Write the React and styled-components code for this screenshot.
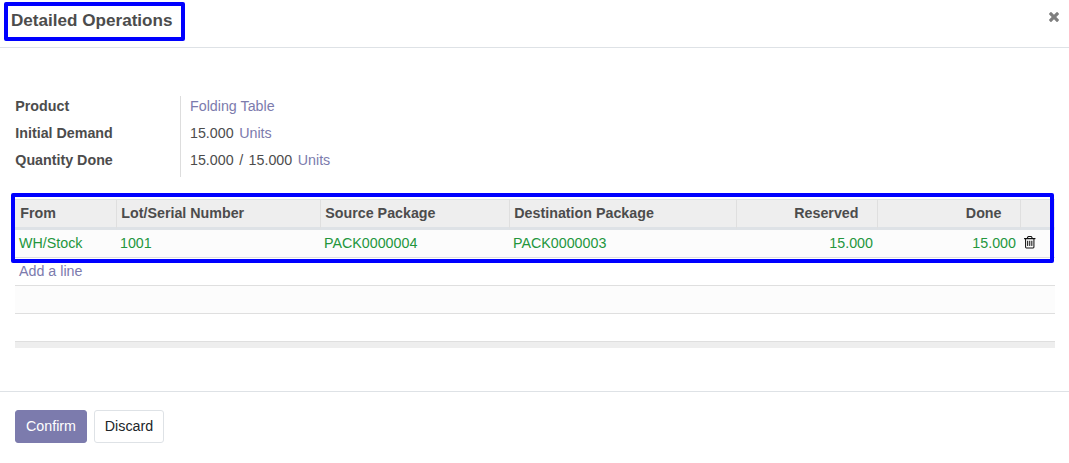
import React from "react";
import styled, { createGlobalStyle } from "styled-components";

const GlobalStyle = createGlobalStyle`
  *, *::before, *::after { box-sizing: border-box; }
  body {
    margin: 0;
    background: #fff;
    color: #4c4c4c;
    font: 14.27px/21px "Liberation Sans", Arial, sans-serif;
  }
`;

const Dialog = styled.div`
  display: flex;
  flex-direction: column;
  width: 1069px;
  height: 463px;
  overflow: hidden;
`;

const Header = styled.header`
  display: flex;
  justify-content: space-between;
  align-items: flex-start;
  height: 48px;
  padding: 2px 10px 0 4px;
  border-bottom: 1px solid #dee2e6;
`;

const Title = styled.h4`
  width: 181px;
  height: 39px;
  margin: 0;
  padding: 0 0 0 3px;
  border: 4px solid #0000ff;
  border-radius: 2px;
  font-size: 17.1px;
  font-weight: bold;
  line-height: 29px;
  white-space: nowrap;
`;

const CloseButton = styled.button`
  display: flex;
  margin: 10px 0 0;
  padding: 0;
  border: 0;
  background: none;
  color: #7f7f7f;
`;

const Body = styled.main`
  flex: 1;
  padding: 48px 14px 0 15px;
`;

const Fields = styled.dl`
  display: grid;
  grid-template-columns: 165px 1fr;
  grid-auto-rows: 27px;
  margin: 0;
  line-height: 20px;
`;

const Label = styled.dt`
  padding-left: 0.3px;
  font-weight: bold;
`;

const Value = styled.dd`
  display: flex;
  gap: 5.5px;
  margin: 0;
  padding-left: 9px;
  border-left: 1px solid #dddddd;
`;

const Link = styled.a`
  color: #7c7bad;
`;

const ListArea = styled.section`
  position: relative;
  margin-top: 22px;
`;

const Outline = styled.div`
  position: absolute;
  top: -6px;
  left: -4px;
  width: 1043px;
  height: 70px;
  border: 4px solid #0000ff;
  border-radius: 2px;
  pointer-events: none;
`;

const Table = styled.table`
  width: 1040px;
  table-layout: fixed;
  border-collapse: separate;
  border-spacing: 0;
`;

const HeadCell = styled.th`
  height: 31px;
  padding: 0 ${(p) => (p.$numeric ? "18.5px" : "4px")} 1px;
  border-top: 1px solid #dee2e6;
  border-bottom: 3px solid #dee2e6;
  border-left: ${(p) => (p.$first ? "0" : "1px solid #dfdfdf")};
  padding-left: ${(p) => (p.$first ? "5.3px" : "4.3px")};
  background: #eeeeee;
  text-align: ${(p) => (p.$numeric ? "right" : "left")};
  line-height: 20px;
`;

const Cell = styled.td`
  height: 28px;
  padding: 0 4px 2px;
  border-bottom: 1px solid #dfdfdf;
  background: ${(p) => (p.$striped ? "#fcfcfc" : "#fff")};
  color: ${(p) => (p.$done ? "#23963c" : "inherit")};
  text-align: ${(p) => (p.$numeric ? "right" : "left")};
  line-height: 20px;
`;

const FooterCell = styled.td`
  height: 6px;
  padding: 0;
  background: #eeeeee;
`;

const TrashSvg = styled.svg`
  display: block;
  color: #111;
`;

const Footer = styled.footer`
  display: flex;
  gap: 7px;
  height: 72px;
  padding: 18px 15px;
  border-top: 1px solid #dee2e6;
`;

const Button = styled.button`
  width: ${(p) => (p.$primary ? "72px" : "70px")};
  height: 33px;
  padding: 0 0 1px;
  border: 1px solid ${(p) => (p.$primary ? "#7c7bad" : "#dee2e6")};
  border-radius: 3px;
  background: ${(p) => (p.$primary ? "#7c7bad" : "#fff")};
  color: ${(p) => (p.$primary ? "#fff" : "#212529")};
  font: inherit;
`;

const TrashIcon = () => (
  <TrashSvg width="11.5" height="12.5" viewBox="192 128 1408 1536" fill="currentColor">
    <path d="M704 736v576q0 14-9 23t-23 9h-64q-14 0-23-9t-9-23v-576q0-14 9-23t23-9h64q14 0 23 9t9 23zm256 0v576q0 14-9 23t-23 9h-64q-14 0-23-9t-9-23v-576q0-14 9-23t23-9h64q14 0 23 9t9 23zm256 0v576q0 14-9 23t-23 9h-64q-14 0-23-9t-9-23v-576q0-14 9-23t23-9h64q14 0 23 9t9 23zm128 724v-948h-896v948q0 22 7 40.5t14.5 27 10.5 8.5h832q3 0 10.5-8.5t14.5-27 7-40.5zm-672-1076h448l-48-117q-7-9-17-11h-317q-10 2-17 11zm928 32v64q0 14-9 23t-23 9h-96v948q0 83-47 143.5t-113 60.5h-832q-66 0-113-58.5t-47-141.5v-952h-96q-14 0-23-9t-9-23v-64q0-14 9-23t23-9h309l70-167q15-37 54-63t79-26h320q40 0 79 26t54 63l70 167h309q14 0 23 9t9 23z" />
  </TrashSvg>
);

const CloseIcon = () => (
  <svg width="10" height="10" viewBox="302 366 1188 1188" fill="currentColor">
    <path d="M1490 1322q0 40-28 68l-136 136q-28 28-68 28t-68-28l-294-294-294 294q-28 28-68 28t-68-28l-136-136q-28-28-28-68t28-68l294-294-294-294q-28-28-28-68t28-68l136-136q28-28 68-28t68 28l294 294 294-294q28-28 68-28t68 28l136 136q28 28 28 68t-28 68l-294 294 294 294q28 28 28 68z" />
  </svg>
);

const columns = [
  { label: "From", width: 101 },
  { label: "Lot/Serial Number", width: 204 },
  { label: "Source Package", width: 189 },
  { label: "Destination Package", width: 227 },
  { label: "Reserved", width: 141, numeric: true },
  { label: "Done", width: 143, numeric: true },
  { label: "", width: 35 },
];

const line = ["WH/Stock", "1001", "PACK0000004", "PACK0000003", "15.000", "15.000"];

export default function App() {
  return (
    <Dialog>
      <GlobalStyle />
      <Header>
        <Title>Detailed Operations</Title>
        <CloseButton aria-label="Close"><CloseIcon /></CloseButton>
      </Header>
      <Body>
        <Fields>
          <Label>Product</Label>
          <Value><Link>Folding Table</Link></Value>
          <Label>Initial Demand</Label>
          <Value><span>15.000</span><Link>Units</Link></Value>
          <Label>Quantity Done</Label>
          <Value><span>15.000</span><span>/</span><span>15.000</span><Link>Units</Link></Value>
        </Fields>
        <ListArea>
          <Table>
            <colgroup>
              {columns.map((c, i) => <col key={i} width={c.width} />)}
            </colgroup>
            <thead>
              <tr>
                {columns.map((c, i) => (
                  <HeadCell key={i} $first={i === 0} $numeric={c.numeric}>{c.label}</HeadCell>
                ))}
              </tr>
            </thead>
            <tbody>
              <tr>
                {line.map((text, i) => (
                  <Cell key={i} $striped $done $numeric={columns[i].numeric}>{text}</Cell>
                ))}
                <Cell $striped><TrashIcon /></Cell>
              </tr>
              <tr><Cell colSpan={7}><Link>Add a line</Link></Cell></tr>
              <tr><Cell colSpan={7} $striped /></tr>
              <tr><Cell colSpan={7} /></tr>
            </tbody>
            <tfoot>
              <tr><FooterCell colSpan={7} /></tr>
            </tfoot>
          </Table>
          <Outline />
        </ListArea>
      </Body>
      <Footer>
        <Button $primary>Confirm</Button>
        <Button>Discard</Button>
      </Footer>
    </Dialog>
  );
}
